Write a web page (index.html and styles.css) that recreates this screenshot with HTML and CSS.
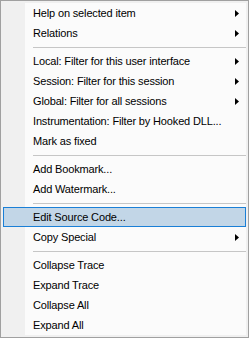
FILE: index.html
```html
<!DOCTYPE html>
<html lang="en">
	<head>
		<meta charset="UTF-8" />
		<title>Context Menu</title>
		<link rel="stylesheet" href="styles.css">
	</head>
	<body>
		<ul class="menu">
			<li class="item">Help on selected item<svg class="arrow" width="4" height="7" viewBox="0 0 4 7"><path d="M0 0L4 3.5L0 7Z" /></svg></li>
			<li class="item">Relations<svg class="arrow" width="4" height="7" viewBox="0 0 4 7"><path d="M0 0L4 3.5L0 7Z" /></svg></li>
			<li class="sep"></li>
			<li class="item">Local: Filter for this user interface<svg class="arrow" width="4" height="7" viewBox="0 0 4 7"><path d="M0 0L4 3.5L0 7Z" /></svg></li>
			<li class="item">Session: Filter for this session<svg class="arrow" width="4" height="7" viewBox="0 0 4 7"><path d="M0 0L4 3.5L0 7Z" /></svg></li>
			<li class="item">Global: Filter for all sessions<svg class="arrow" width="4" height="7" viewBox="0 0 4 7"><path d="M0 0L4 3.5L0 7Z" /></svg></li>
			<li class="item">Instrumentation: Filter by Hooked DLL...</li>
			<li class="item">Mark as fixed</li>
			<li class="sep"></li>
			<li class="item">Add Bookmark...</li>
			<li class="item">Add Watermark...</li>
			<li class="sep"></li>
			<li class="item active">Edit Source Code...</li>
			<li class="item">Copy Special<svg class="arrow" width="4" height="7" viewBox="0 0 4 7"><path d="M0 0L4 3.5L0 7Z" /></svg></li>
			<li class="sep"></li>
			<li class="item">Collapse Trace</li>
			<li class="item">Expand Trace</li>
			<li class="item">Collapse All</li>
			<li class="item">Expand All</li>
		</ul>
	</body>
</html>
```

FILE: styles.css
```css
body {
	margin: 0;
	font-family: "Liberation Sans", Arial, sans-serif;
	font-size: 11px;
	letter-spacing: -0.15px;
	color: #000;
}
.menu {
	list-style: none;
	margin: 0;
	width: 243px;
	padding: 2px;
	border: 1px solid #a0a0a0;
	background: #f0f0f0;
}
.item {
	display: flex;
	align-items: center;
	justify-content: space-between;
	height: 20px;
	padding: 0 7px 0 30px;
	background: linear-gradient(to right, #f0f0f0 22px, #fbfbfb 22px);
	white-space: nowrap;
}
.item.active {
	background: #c2d6e7;
	outline: 1px solid #1a7fd6;
	outline-offset: -1px;
}
.arrow {
	fill: #000;
	flex: none;
}
.sep {
	height: 8px;
	background: linear-gradient(to right, #f0f0f0 22px, #fbfbfb 22px);
	display: flex;
	align-items: center;
	padding-left: 30px;
}
.sep::after {
	content: "";
	display: block;
	height: 1px;
	width: 100%;
	margin-top: 1px;
	background: #c6c6c6;
}
```
